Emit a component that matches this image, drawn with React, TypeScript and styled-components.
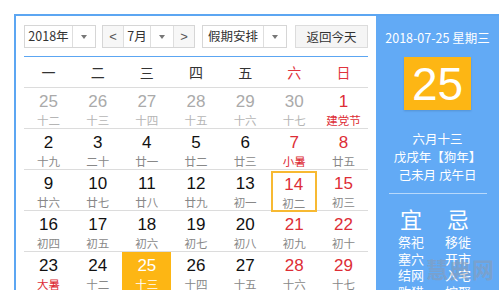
import styled, { createGlobalStyle } from "styled-components";

const GlobalStyle = createGlobalStyle`
  html, body {
    margin: 0;
    padding: 0;
    background: #fff;
    overflow: hidden;
  }
  body {
    font-family: "Liberation Sans", "Noto Sans CJK SC", sans-serif;
  }
`;

const Page = styled.div`
  padding: 14px 0 0 14px;
  height: 290px;
  box-sizing: border-box;
  overflow: hidden;
`;

const Frame = styled.div`
  display: flex;
  border-top: 2px solid #5ca6f2;
  border-left: 2px solid #5ca6f2;
  height: 300px;
`;

const Main = styled.div`
  width: 344px;
  padding: 9px 8px 0 8px;
  flex-shrink: 0;
`;

const Toolbar = styled.div`
  display: flex;
  align-items: center;
  height: 23px;
`;

const SelectBox = styled.div<{ $w: number; $ml?: number }>`
  display: flex;
  width: ${(p) => p.$w}px;
  height: 23px;
  margin-left: ${(p) => p.$ml ?? 0}px;
  box-sizing: border-box;
  border: 1px solid #d6d6d6;
  background: #fff;
  font-family: "Noto Sans CJK SC", sans-serif;
  font-size: 12.5px;
  color: #333;
`;

const SelectText = styled.div`
  flex: 1;
  display: flex;
  align-items: center;
  justify-content: center;
  line-height: 1;
`;

const ArrowCell = styled.div`
  width: 22px;
  border-left: 1px solid #dedede;
  display: flex;
  align-items: center;
  justify-content: center;
  &::after {
    content: "";
    border-left: 3.5px solid transparent;
    border-right: 3.5px solid transparent;
    border-top: 4px solid #777;
  }
`;

const NavCell = styled.div<{ $side: "l" | "r" }>`
  width: 20px;
  display: flex;
  align-items: center;
  justify-content: center;
  background: #f7f7f7;
  ${(p) => (p.$side === "l" ? "border-right" : "border-left")}: 1px solid #dedede;
  color: #555;
  font-family: "Liberation Sans", sans-serif;
  font-size: 13px;
`;

const TodayButton = styled.div`
  margin-left: 8px;
  width: 73px;
  height: 23px;
  box-sizing: border-box;
  border: 1px solid #dcdcdc;
  background: #f5f5f5;
  display: flex;
  align-items: center;
  justify-content: center;
  font-family: "Noto Sans CJK SC", sans-serif;
  font-size: 12.5px;
  color: #333;
`;

const WeekHeader = styled.div`
  margin-top: 8px;
  display: grid;
  grid-template-columns: repeat(7, 1fr);
  border-top: 1px solid #5ca6f2;
  border-bottom: 1px solid #dcdcdc;
  height: 30px;
  align-items: center;
`;

const WeekDay = styled.div<{ $red?: boolean }>`
  text-align: center;
  font-family: "Noto Sans CJK SC", sans-serif;
  font-size: 14px;
  color: ${(p) => (p.$red ? "#e0343d" : "#333")};
`;

const Row = styled.div`
  display: grid;
  grid-template-columns: repeat(7, 1fr);
  height: 41px;
  border-bottom: 1px solid #dcdcdc;
  box-sizing: border-box;
`;

const Cell = styled.div<{ $today?: boolean; $picked?: boolean }>`
  display: flex;
  flex-direction: column;
  align-items: center;
  box-sizing: border-box;
  padding-top: ${(p) => (p.$picked ? 2 : 4)}px;
  background: ${(p) => (p.$today ? "#fdb614" : "transparent")};
  ${(p) =>
    p.$picked
      ? "border: 2px solid #f7b932; margin: 1px 2px 0 1px;"
      : ""}
`;

const Num = styled.div<{ $tone: string }>`
  font-family: "Liberation Sans", sans-serif;
  font-size: 17px;
  line-height: 20px;
  color: ${(p) => p.$tone};
`;

const Lunar = styled.div<{ $tone: string }>`
  font-family: "Noto Sans CJK SC", sans-serif;
  font-size: 11.5px;
  line-height: 14px;
  margin-top: 1px;
  color: ${(p) => p.$tone};
`;

const Side = styled.div`
  position: relative;
  flex: 1;
  background: #62aaf5;
  display: flex;
  flex-direction: column;
  align-items: center;
  color: #fff;
  font-family: "Noto Sans CJK SC", sans-serif;
`;

const SideDate = styled.div`
  margin-top: 14px;
  font-size: 12.5px;
  line-height: 16px;
`;

const BigDay = styled.div`
  margin-top: 11px;
  width: 67px;
  height: 53px;
  background: #fdb614;
  box-shadow: 0 1px 2px rgba(0, 0, 0, 0.15);
  display: flex;
  align-items: center;
  justify-content: center;
  font-family: "Liberation Sans", sans-serif;
  font-size: 46px;
  color: #fff;
`;

const InfoLine = styled.div`
  font-size: 12.5px;
  line-height: 18px;
`;

const InfoBlock = styled.div`
  margin-top: 20px;
  display: flex;
  flex-direction: column;
  align-items: center;
`;

const Divider = styled.div`
  margin-top: 9px;
  width: 98px;
  height: 1px;
  background: rgba(255, 255, 255, 0.55);
`;

const Lists = styled.div`
  margin-top: 10px;
  margin-right: 6px;
  display: flex;
  gap: 21px;
`;

const ListCol = styled.div`
  display: flex;
  flex-direction: column;
  align-items: center;
`;

const ListHead = styled.div`
  font-size: 22px;
  line-height: 28px;
  margin-bottom: 2px;
`;

const ListItem = styled.div`
  font-size: 13px;
  line-height: 16.5px;
`;

const Watermark = styled.div`
  position: absolute;
  left: 50px;
  top: 236px;
  font-family: "Noto Sans CJK SC", sans-serif;
  font-size: 22px;
  font-weight: 700;
  letter-spacing: 1px;
  color: rgba(150, 150, 160, 0.45);
`;

type Day = {
  n: number;
  l: string;
  other?: boolean;
  red?: boolean;
  fest?: boolean;
  today?: boolean;
  picked?: boolean;
};

const weeks: Day[][] = [
  [
    { n: 25, l: "十二", other: true },
    { n: 26, l: "十三", other: true },
    { n: 27, l: "十四", other: true },
    { n: 28, l: "十五", other: true },
    { n: 29, l: "十六", other: true },
    { n: 30, l: "十七", other: true },
    { n: 1, l: "建党节", red: true, fest: true },
  ],
  [
    { n: 2, l: "十九" },
    { n: 3, l: "二十" },
    { n: 4, l: "廿一" },
    { n: 5, l: "廿二" },
    { n: 6, l: "廿三" },
    { n: 7, l: "小暑", red: true, fest: true },
    { n: 8, l: "廿五", red: true },
  ],
  [
    { n: 9, l: "廿六" },
    { n: 10, l: "廿七" },
    { n: 11, l: "廿八" },
    { n: 12, l: "廿九" },
    { n: 13, l: "初一" },
    { n: 14, l: "初二", red: true, picked: true },
    { n: 15, l: "初三", red: true },
  ],
  [
    { n: 16, l: "初四" },
    { n: 17, l: "初五" },
    { n: 18, l: "初六" },
    { n: 19, l: "初七" },
    { n: 20, l: "初八" },
    { n: 21, l: "初九", red: true },
    { n: 22, l: "初十", red: true },
  ],
  [
    { n: 23, l: "大暑", fest: true },
    { n: 24, l: "十二" },
    { n: 25, l: "十三", today: true },
    { n: 26, l: "十四" },
    { n: 27, l: "十五" },
    { n: 28, l: "十六", red: true },
    { n: 29, l: "十七", red: true },
  ],
];

const weekNames = ["一", "二", "三", "四", "五", "六", "日"];

const numTone = (d: Day) =>
  d.today ? "#fff" : d.other ? "#aaa" : d.red ? "#dd2d36" : "#111";
const lunarTone = (d: Day) =>
  d.today ? "#fff" : d.fest ? "#dd2d36" : d.other ? "#b5b5b5" : "#888";

export default function App() {
  return (
    <>
      <GlobalStyle />
      <Page>
        <Frame>
          <Main>
            <Toolbar>
              <SelectBox $w={72}>
                <SelectText>2018年</SelectText>
                <ArrowCell />
              </SelectBox>
              <SelectBox $w={93} $ml={6}>
                <NavCell $side="l">&lt;</NavCell>
                <SelectText>7月</SelectText>
                <ArrowCell />
                <NavCell $side="r">&gt;</NavCell>
              </SelectBox>
              <SelectBox $w={85} $ml={7}>
                <SelectText>假期安排</SelectText>
                <ArrowCell />
              </SelectBox>
              <TodayButton>返回今天</TodayButton>
            </Toolbar>
            <WeekHeader>
              {weekNames.map((w, i) => (
                <WeekDay key={w} $red={i >= 5}>
                  {w}
                </WeekDay>
              ))}
            </WeekHeader>
            {weeks.map((row, ri) => (
              <Row key={ri}>
                {row.map((d) => (
                  <Cell key={`${ri}-${d.n}`} $today={d.today} $picked={d.picked}>
                    <Num $tone={numTone(d)}>{d.n}</Num>
                    <Lunar $tone={lunarTone(d)}>{d.l}</Lunar>
                  </Cell>
                ))}
              </Row>
            ))}
          </Main>
          <Side>
            <SideDate>2018-07-25 星期三</SideDate>
            <BigDay>25</BigDay>
            <InfoBlock>
              <InfoLine>六月十三</InfoLine>
              <InfoLine>戊戌年【狗年】</InfoLine>
              <InfoLine>己未月 戊午日</InfoLine>
            </InfoBlock>
            <Divider />
            <Lists>
              <ListCol>
                <ListHead>宜</ListHead>
                <ListItem>祭祀</ListItem>
                <ListItem>塞穴</ListItem>
                <ListItem>结网</ListItem>
                <ListItem>畋猎</ListItem>
              </ListCol>
              <ListCol>
                <ListHead>忌</ListHead>
                <ListItem>移徙</ListItem>
                <ListItem>开市</ListItem>
                <ListItem>入宅</ListItem>
                <ListItem>嫁娶</ListItem>
              </ListCol>
            </Lists>
            <Watermark>慧典网</Watermark>
          </Side>
        </Frame>
      </Page>
    </>
  );
}
